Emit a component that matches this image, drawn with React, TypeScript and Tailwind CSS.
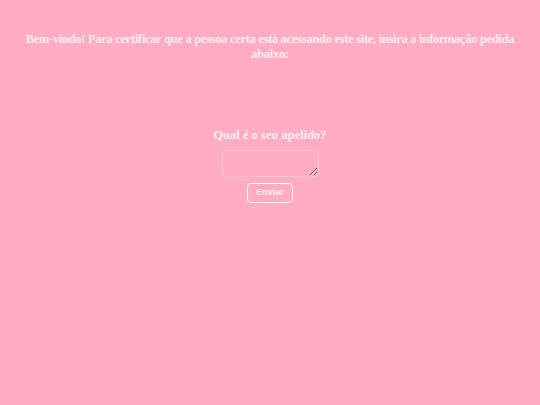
export default function App() {
  return (
    <div className="min-h-[405px] w-full bg-[#ffabc4] text-[#fdeef2] font-['Liberation_Serif',serif]">
      <div className="px-4 pt-[32px] text-center">
        <h1 className="text-[12.5px] font-bold leading-[15px] tracking-[-0.3px]">
          Bem-vindo! Para certificar que a pessoa certa está acessando este site, insira a informação pedida abaixo:
        </h1>
      </div>
      <form className="mt-[65px] flex flex-col items-center" onSubmit={(e) => e.preventDefault()}>
        <label className="text-[12.5px] font-bold leading-[16px]">Qual é o seu apelido?</label>
        <textarea className="mt-[7px] h-[27px] w-[97px] rounded-sm border border-[#e9c8d2] bg-transparent" />
        <button
          type="submit"
          className="mt-[6px] h-[20px] w-[46px] rounded-[4px] border border-white font-['Liberation_Sans',sans-serif] text-[9px] font-bold text-[#fdeef2]"
        >
          Enviar
        </button>
      </form>
    </div>
  );
}
